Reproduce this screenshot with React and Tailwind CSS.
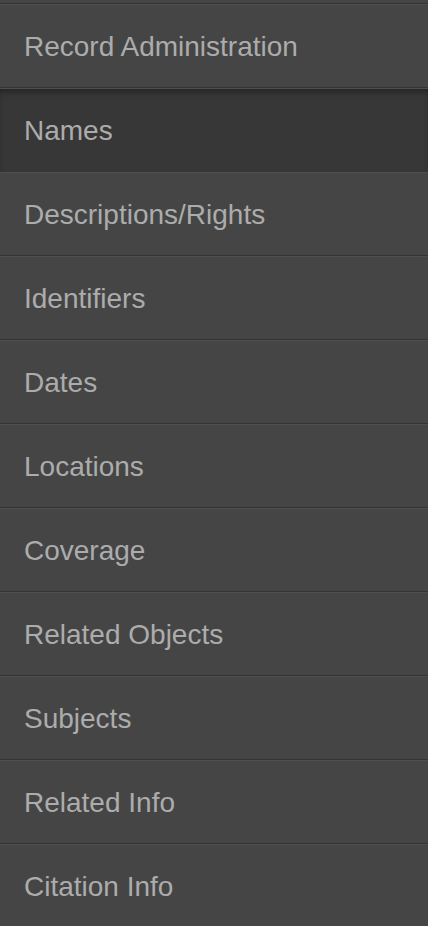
import React from 'react';

const sections = [
  'Record Administration',
  'Names',
  'Descriptions/Rights',
  'Identifiers',
  'Dates',
  'Locations',
  'Coverage',
  'Related Objects',
  'Subjects',
  'Related Info',
  'Citation Info',
];

function NavRow({ label, active }) {
  return (
    <li
      className={
        active
          ? 'flex h-[84px] items-center border-t border-b border-t-[#4f4f4f] border-b-[#343434] bg-[#373737] pl-6 pt-[2px] shadow-[inset_0_5px_6px_-2px_rgba(0,0,0,0.35)]'
          : 'flex h-[84px] items-center border-t border-b border-t-[#4f4f4f] border-b-[#343434] bg-[#454545] pl-6 pt-[2px]'
      }
    >
      <span className="text-[28px] leading-none text-[#acacac]">{label}</span>
    </li>
  );
}

export default function App() {
  return (
    <div className="min-h-[926px] w-full bg-[#454545] font-['Liberation_Sans',Arial,sans-serif]">
      <div className="h-[4px] border-b border-[#343434] bg-[#454545]" />
      <ul>
        {sections.map((s) => (
          <NavRow key={s} label={s} active={s === 'Names'} />
        ))}
      </ul>
    </div>
  );
}
